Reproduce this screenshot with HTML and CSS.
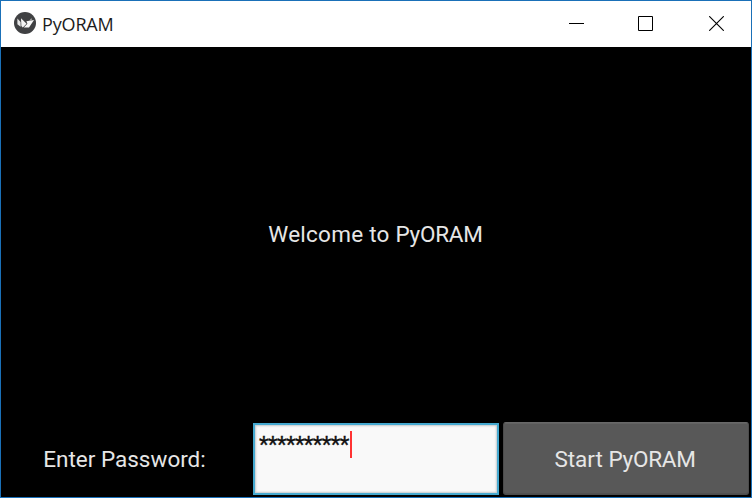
FILE: index.html
```html
<!DOCTYPE html>
<html lang="en">
<head>
<meta charset="utf-8">
<title>PyORAM</title>
<link rel="stylesheet" href="styles.css">
</head>
<body>
<div class="window">
  <header class="titlebar">
    <svg class="logo" width="22" height="22" viewBox="0 0 22 22">
      <circle cx="11" cy="11" r="11" fill="#404143"/>
      <path d="M3.4 6.6L6.6 10V14.8L3.4 12.2Z" fill="#e8e8e8"/>
      <path d="M7 6.2L12.6 11.8L8.8 15.6L7.4 14Z" fill="#f4f4f4"/>
      <path d="M12.4 9.2L20 8L15 15.6L9.8 15.6L13.4 11.8Z" fill="#f8f8f8"/>
      <path d="M15.2 8.8L17.4 6L18 8.4Z" fill="#aaa"/>
    </svg>
    <h1 class="title">PyORAM</h1>
    <div class="controls">
      <svg width="15" height="15" viewBox="0 0 15 15"><path d="M0 7.5H15" stroke="#000"/></svg>
      <svg width="15" height="15" viewBox="0 0 15 15"><path d="M.5 .5H14.5V14.5H.5Z" fill="none" stroke="#000"/></svg>
      <svg width="15" height="15" viewBox="0 0 15 15"><path d="M.2 .2L14.8 14.8M14.8 .2L.2 14.8" stroke="#000" stroke-width="1.1"/></svg>
    </div>
  </header>
  <main class="welcome"><span>Welcome to <span class="name">PyORAM</span></span></main>
  <div class="form">
    <label class="label">Enter Password:</label>
    <div class="field"><span class="mask">**********</span><span class="caret"></span></div>
    <button class="start">Start <span class="name">PyORAM</span></button>
  </div>
</div>
</body>
</html>
```
FILE: styles.css
```css
* { box-sizing: border-box; }
body { margin: 0; background: #000; }
.window {
  width: 752px;
  height: 498px;
  border: 1px solid #1a70b8;
  display: flex;
  flex-direction: column;
  background: #000;
  color: #e6e6e6;
  font: 22.5px/28px Roboto, sans-serif;
  overflow: hidden;
}
.titlebar {
  height: 46px;
  flex: none;
  display: flex;
  align-items: center;
  padding: 0 27px 2px 13px;
  background: #fff;
  color: #1c1c1c;
}
.title {
  margin: 2px 0 0 6px;
  font: 18px/24px "Open Sans", sans-serif;
  letter-spacing: -.15px;
}
.controls { margin-left: auto; display: flex; gap: 54px; }
.controls svg { display: block; }
.controls svg:last-child { margin-left: 2px; }
.welcome {
  flex: 1;
  display: flex;
  align-items: center;
  justify-content: center;
  padding: 0 1px 2px 0;
  letter-spacing: .25px;
}
.name { letter-spacing: -.25px; }
.form {
  height: 75px;
  flex: none;
  display: grid;
  grid-template-columns: 247px 247px 247px;
  column-gap: 3px;
  padding: 0 1px 2px;
}
.label { display: flex; align-items: center; justify-content: center; padding-right: 2px; }
.field {
  margin: 1px 0 0 1px;
  border: 2px solid #45a9d0;
  background: #f9f9f9;
  box-shadow: inset 0 0 2px 1px #c4c8ca;
  color: #111;
  display: flex;
  padding: 5px 0 0 4px;
}
.mask { letter-spacing: -.72px; -webkit-text-stroke: .3px #111; }
.caret { width: 2px; height: 27px; background: #f33; margin: 1px 0 0 1px; }
.start {
  margin-left: 1px;
  border: 1px solid #4c4c4c;
  border-top-color: #686868;
  border-radius: 3px;
  background: #585858;
  color: inherit;
  font: inherit;
  padding: 0 2px 0 0;
  box-shadow: inset 0 1px #626262, inset 0 -1px #505050;
}
```
